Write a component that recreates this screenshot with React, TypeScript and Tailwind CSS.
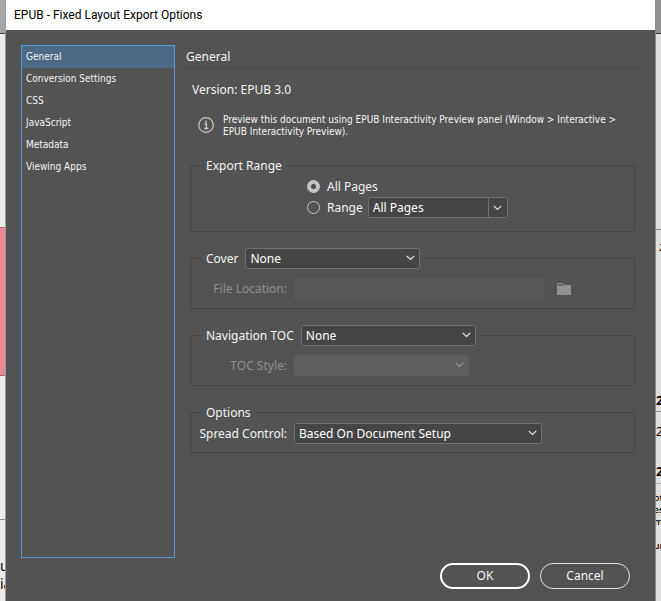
import { useState } from "react";
import type { ReactNode, SelectHTMLAttributes } from "react";

const sections = ["General", "Conversion Settings", "CSS", "JavaScript", "Metadata", "Viewing Apps"];

function Chevron({ className = "" }: { className?: string }) {
    return (
        <svg viewBox="0 0 9 6" className={`h-[6px] w-[9px] ${className}`} fill="none" stroke="currentColor" strokeWidth="1.2" aria-hidden="true">
            <path d="M0.7 0.9 4.5 4.5 8.3 0.9" />
        </svg>
    );
}

function Dropdown({ options, width, ...rest }: { options: string[]; width: string } & SelectHTMLAttributes<HTMLSelectElement>) {
    return (
        <span className={`relative block ${width}`}>
            <select
                {...rest}
                className="block h-[21px] w-full appearance-none rounded-xs border border-[#707070] bg-[#454545] pl-1 pr-5 text-white disabled:border-[#5e5e5e] disabled:bg-[#5e5e5e] disabled:opacity-100"
            >
                {options.map((o) => (
                    <option key={o}>{o}</option>
                ))}
            </select>
            <Chevron className={`pointer-events-none absolute top-[7px] right-[5px] ${rest.disabled ? "text-[#9c9c9c]" : "text-[#e6e6e6]"}`} />
        </span>
    );
}

function Group({ legend, children, className = "" }: { legend: ReactNode; children: ReactNode; className?: string }) {
    return (
        <fieldset className={`min-w-0 rounded-xs border border-[#444444] ${className}`}>
            <legend className="ml-[10px] flex h-[21px] items-center gap-[7px] pl-[5px] pr-1">{legend}</legend>
            {children}
        </fieldset>
    );
}

function Radio({ id, checked, onChange, label }: { id: string; checked: boolean; onChange: () => void; label: string }) {
    return (
        <>
            <input
                type="radio"
                id={id}
                name="range"
                checked={checked}
                onChange={onChange}
                className="size-[13px] appearance-none rounded-full border border-[#c4c4c4] checked:border-4 checked:bg-[#484848]"
            />
            <label htmlFor={id} className="ml-[7px]">{label}</label>
        </>
    );
}

// Slivers of the document window that stay visible beside the dialog
function DocumentLeft() {
    return (
        <div className="flex w-[6px] shrink-0 flex-col overflow-hidden border-r border-[#9a9a9a] bg-[#ececec] text-sm leading-[18px] text-black" aria-hidden="true">
            <div className="h-[34px] border-b border-[#444444] bg-[#a6a6a6]" />
            <div className="h-[193px]" />
            <div className="h-[149px] border-y border-[#b06a74] bg-[#eb8796]" />
            <div className="h-[144px] border-b border-[#8e8e8e]" />
            <div className="h-[37px]" />
            <div>u</div>
            <div>ia</div>
        </div>
    );
}

function DocumentRight() {
    return (
        <div className="flex w-[6px] shrink-0 flex-col overflow-hidden border-l border-[#8a8a8a] bg-[#dedede] text-black" aria-hidden="true">
            <div className="h-[34px] border-b border-[#333333] bg-[#929292]" />
            <div className="h-[196px] border-b border-[#8e8e8e]" />
            <div className="h-[161px] pt-3 pl-[3px] text-[9px] leading-3">2</div>
            <div className="h-[21px] border-b border-[#8e8e8e] text-xs leading-5 font-bold">2</div>
            <div className="h-[48px] pt-[10px] text-xs leading-5">2</div>
            <div className="h-[24px] border-b border-[#b4b4b4] text-xs leading-6 font-bold">2</div>
            <div className="flex flex-col items-center pt-2 text-[9px] leading-3 font-medium">
                <span>ot</span>
                <span>es</span>
                <span>m</span>
                <span className="pt-3">ur</span>
            </div>
        </div>
    );
}

export default function App() {
    const [active, setActive] = useState("General");
    const [range, setRange] = useState("all");
    const [rangeText, setRangeText] = useState("All Pages");

    return (
        <div className="flex min-h-screen bg-[#535353] font-['Noto_Sans',sans-serif] text-xs text-[#f4f4f4]">
            <DocumentLeft />

            <div role="dialog" aria-labelledby="dialog-title" className="flex min-w-0 flex-1 flex-col">
                <h1 id="dialog-title" className="flex h-[30px] items-center bg-white pl-2 font-['Roboto',sans-serif] text-xs text-black">
                    EPUB - Fixed Layout Export Options
                </h1>

                <div className="flex flex-1 gap-[9px] pt-[15px] pr-4 pl-[15px]">
                    <nav className="min-h-[513px] w-[154px] shrink-0 self-start border border-[#5b97d0] font-['DejaVu_Sans_Condensed','Noto_Sans',sans-serif]">
                        {sections.map((s) => (
                            <button
                                key={s}
                                type="button"
                                onClick={() => setActive(s)}
                                className={`block h-[22px] w-full pl-1 text-left text-[10px] ${s === active ? "bg-[#4c6a86]" : ""}`}
                            >
                                {s}
                            </button>
                        ))}
                    </nav>

                    <main className="min-w-0 flex-1">
                        <h2 className="h-6 border-b border-[#4a4a4a] pl-[2px] leading-6">General</h2>
                        <p className="mt-[11px] pl-2 leading-5">Version: EPUB 3.0</p>

                        <div className="mt-[14px] flex h-[25px] gap-[9px] pl-[14px] font-['DejaVu_Sans_Condensed','Noto_Sans',sans-serif] text-[10px] leading-3">
                            <svg viewBox="0 0 16 16" className="mt-[3px] size-4 shrink-0" fill="none" stroke="#c8c8c8" aria-hidden="true">
                                <circle cx="8" cy="8" r="7.3" strokeWidth="1.2" />
                                <path d="M6.3 7H8.4V11.4M6 11.5H10.4" strokeWidth="1.3" />
                                <path d="M7.2 4.6H8.9" strokeWidth="1.8" />
                            </svg>
                            <p>
                                Preview this document using EPUB Interactivity Preview panel (Window &gt; Interactive &gt; EPUB Interactivity Preview).
                            </p>
                        </div>

                        <form className="mt-4 mr-1 ml-[6px] flex flex-col gap-4">
                            <Group legend="Export Range" className="pb-[13px]">
                                <div className="flex h-[21px] items-center pl-[116px]">
                                    <Radio id="range-all" checked={range === "all"} onChange={() => setRange("all")} label="All Pages" />
                                </div>
                                <div className="flex h-[21px] items-center pl-[116px]">
                                    <Radio id="range-some" checked={range === "some"} onChange={() => setRange("some")} label="Range" />
                                    <div className="ml-[5px] flex h-[21px] w-[140px] rounded-xs border border-[#707070] bg-[#454545]">
                                        <input
                                            type="text"
                                            aria-label="Page range"
                                            value={rangeText}
                                            onChange={(e) => setRangeText(e.target.value)}
                                            className="min-w-0 flex-1 pl-1 text-white outline-none"
                                        />
                                        <button type="button" aria-label="Show ranges" className="flex w-[19px] items-center justify-center border-l border-[#707070] text-[#e6e6e6]">
                                            <Chevron />
                                        </button>
                                    </div>
                                </div>
                            </Group>

                            <Group
                                className="pb-[9px]"
                                legend={
                                    <>
                                        <label htmlFor="cover">Cover</label>
                                        <Dropdown id="cover" width="w-[175px]" options={["None", "Rasterize First Page", "Choose Image"]} />
                                    </>
                                }
                            >
                                <div className="flex items-center gap-[7px] pt-[9px]">
                                    <label htmlFor="file" className="w-[96px] text-right text-[#8e8e8e]">File Location:</label>
                                    <input id="file" type="text" disabled className="h-[21px] w-[251px] rounded-xs bg-[#585858] px-1" />
                                    <button type="button" disabled aria-label="Browse" className="ml-[5px] text-[#929292]">
                                        <svg viewBox="0 0 14 12" className="h-3 w-[14px]" fill="currentColor" aria-hidden="true">
                                            <path d="M0 0.8Q0 0 0.8 0H5.6L7.6 2H13.4Q14 2 14 2.6V12H0Z" />
                                            <path d="M1 1H5.2L6.8 2.8H1Z" fill="#5a5a5a" />
                                        </svg>
                                    </button>
                                </div>
                            </Group>

                            <Group
                                className="pb-[9px]"
                                legend={
                                    <>
                                        <label htmlFor="toc">Navigation TOC</label>
                                        <Dropdown id="toc" width="w-[175px]" options={["None", "File Name", "Multi Level (TOC Style)"]} />
                                    </>
                                }
                            >
                                <div className="flex items-center gap-[7px] pt-[9px]">
                                    <label htmlFor="toc-style" className="w-[96px] text-right text-[#8e8e8e]">TOC Style:</label>
                                    <Dropdown id="toc-style" width="w-[175px]" options={[""]} disabled />
                                </div>
                            </Group>

                            <Group legend="Options" className="pb-2">
                                <div className="flex items-center gap-[7px]">
                                    <label htmlFor="spread" className="w-[96px] text-right">Spread Control:</label>
                                    <Dropdown id="spread" width="w-[248px]" options={["Based On Document Setup", "Convert Spread to Landscape Page", "Disable Spreads"]} />
                                </div>
                            </Group>
                        </form>
                    </main>
                </div>

                <div className="flex justify-end gap-[10px] pt-1 pr-[25px] pb-3">
                    <button type="button" className="h-[26px] w-[90px] rounded-full border-2 border-white">OK</button>
                    <button type="button" className="h-[26px] w-[90px] rounded-full border border-[#e4e4e4]">Cancel</button>
                </div>
            </div>

            <DocumentRight />
        </div>
    );
}
